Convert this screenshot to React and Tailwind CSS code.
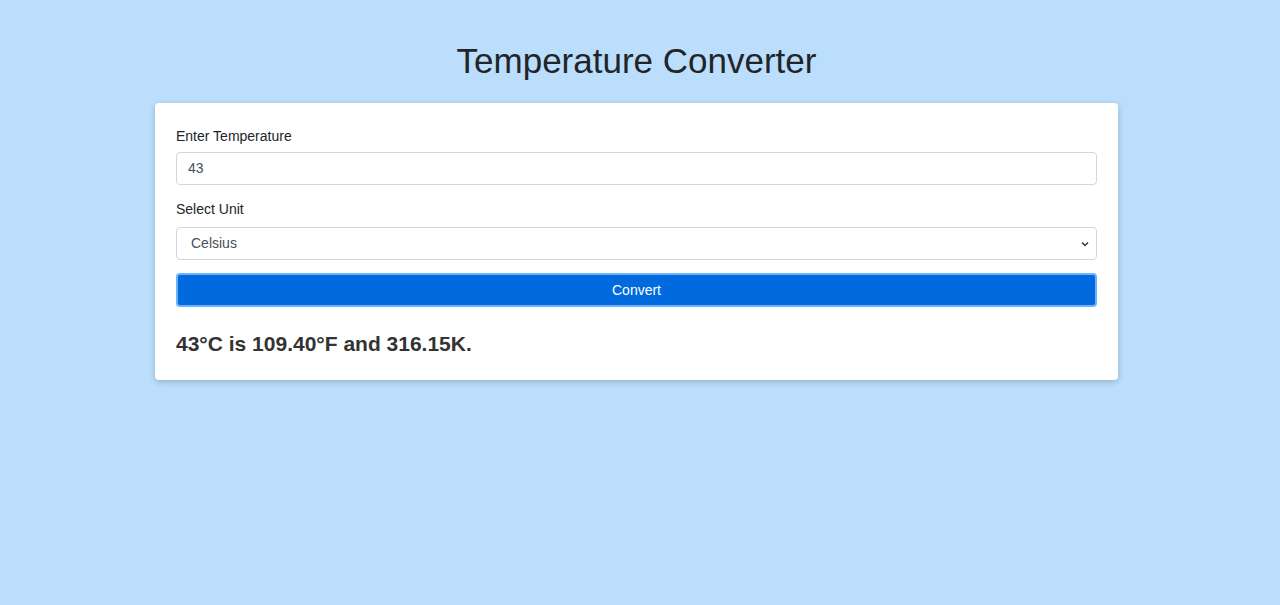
export default function App() {
  return (
    <div className="min-h-[605px] bg-[#bbdefc] pt-[38px] pr-[7px]" style={{ fontFamily: '"Liberation Sans", Arial, sans-serif' }}>
      <h1 className="text-center text-[35px] leading-[46px] text-[#212529] mb-[19px]">Temperature Converter</h1>
      <div className="mx-auto w-[963px] bg-white rounded-[4px] shadow-[0_2px_6px_rgba(0,0,0,0.2)] px-[21px] pt-[23px] pb-[22px]">
        <label className="block text-[14px] leading-[21px] text-[#212529] mb-[5px]">Enter Temperature</label>
        <div className="h-[33px] border border-[#d4d7da] rounded-[4px] flex items-center px-[11px] text-[14px] text-[#495057]">43</div>
        <label className="block text-[14px] leading-[21px] text-[#212529] mt-[14px] mb-[7px]">Select Unit</label>
        <div className="h-[33px] border border-[#d4d7da] rounded-[4px] flex items-center justify-between pl-[14px] pr-[6px] text-[14px] text-[#495057]">
          <span>Celsius</span>
          <svg width="10" height="10" viewBox="0 0 10 10"><path d="M2 3.5 L5 6.5 L8 3.5" fill="none" stroke="#333" strokeWidth="1.5" /></svg>
        </div>
        <div className="mt-[13px] h-[34px] rounded-[4px] bg-[#006ade] border-2 border-[#6db3f7] flex items-center justify-center text-white text-[14px]">Convert</div>
        <div className="mt-[23px] text-[21px] font-bold leading-[28px] text-[#333333]">43°C is 109.40°F and 316.15K.</div>
      </div>
    </div>
  );
}
